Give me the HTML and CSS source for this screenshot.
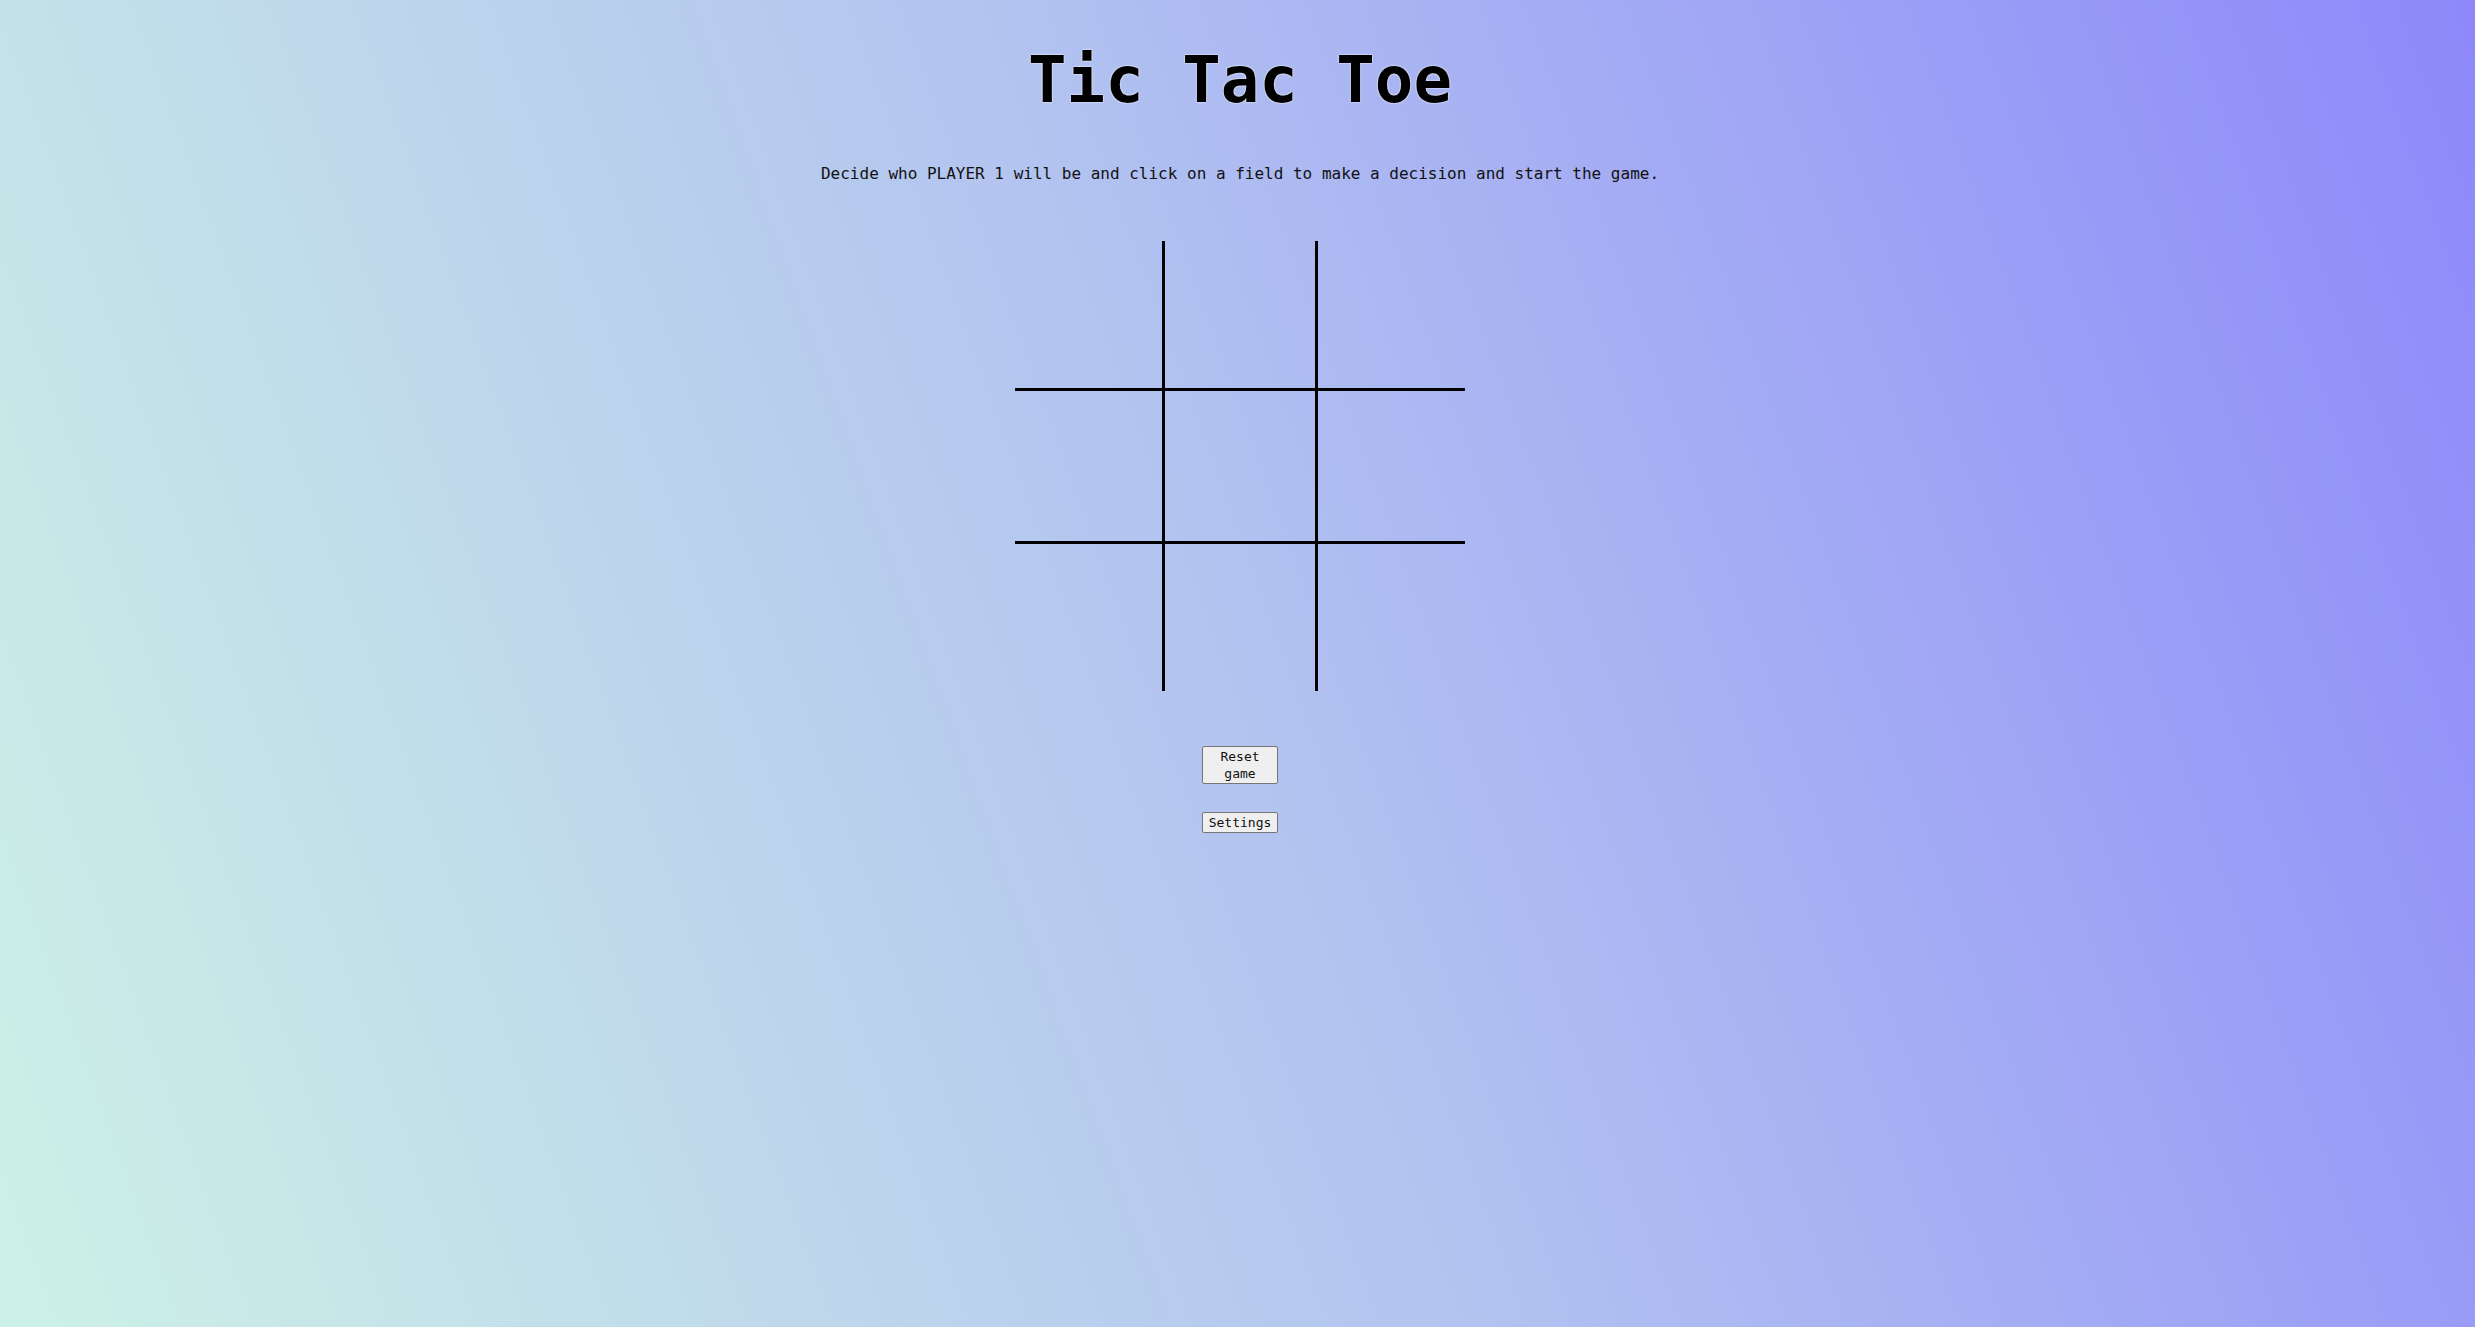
FILE: index.html
```html
<!DOCTYPE html>
<html lang="en">
<head>
<meta charset="utf-8">
<title>Tic Tac Toe</title>
<link rel="stylesheet" href="styles.css">
</head>
<body>
<main class="game">
  <h1 class="title">Tic Tac Toe</h1>
  <p class="info">Decide who PLAYER 1 will be and click on a field to make a decision and start the game.</p>
  <div class="board">
    <div class="cell c-tl"></div>
    <div class="cell c-tm"></div>
    <div class="cell c-tr"></div>
    <div class="cell c-ml"></div>
    <div class="cell c-mm"></div>
    <div class="cell c-mr"></div>
    <div class="cell c-bl"></div>
    <div class="cell c-bm"></div>
    <div class="cell c-br"></div>
  </div>
  <div class="controls">
    <button class="btn" type="button">Reset game</button>
    <button class="btn" type="button">Settings</button>
  </div>
</main>
</body>
</html>
```
FILE: styles.css
```css
html, body {
  height: 100%;
}
body {
  margin: 0;
  min-height: 100vh;
  background: linear-gradient(70deg, #cdf1e6 0%, #b2c3f0 50%, #8e88fa 100%);
  font-family: "DejaVu Sans Mono", "Liberation Mono", monospace;
  color: #111;
}
.game {
  display: flex;
  flex-direction: column;
  align-items: center;
  padding-left: 5px;
}
.title {
  margin: 43px 0 0;
  font-size: 64px;
  line-height: 75px;
  font-weight: bold;
  color: #000;
  text-shadow: 0 0 2px #fff, 0 0 1px #fff;
}
.info {
  margin: 46px 0 0;
  font-size: 16px;
  line-height: 19px;
}
.board {
  margin-top: 58px;
  display: grid;
  grid-template-columns: repeat(3, 150px);
  grid-template-rows: repeat(3, 150px);
}
.cell {
  box-sizing: border-box;
}
.c-tl, .c-tm, .c-tr { border-bottom: 3px solid #000; }
.c-bl, .c-bm, .c-br { border-top: 3px solid #000; }
.c-tl, .c-ml, .c-bl { border-right: 3px solid #000; }
.c-tr, .c-mr, .c-br { border-left: 3px solid #000; }
.controls {
  margin-top: 55px;
  display: flex;
  flex-direction: column;
  align-items: center;
  gap: 28px;
}
.btn {
  box-sizing: border-box;
  width: 76px;
  padding: 1px 4px;
  font-family: "DejaVu Sans Mono", "Liberation Mono", monospace;
  font-size: 13px;
  line-height: 17px;
  color: #111;
  background: #efefef;
  border: 1px solid #767676;
  border-radius: 2px;
}
```
